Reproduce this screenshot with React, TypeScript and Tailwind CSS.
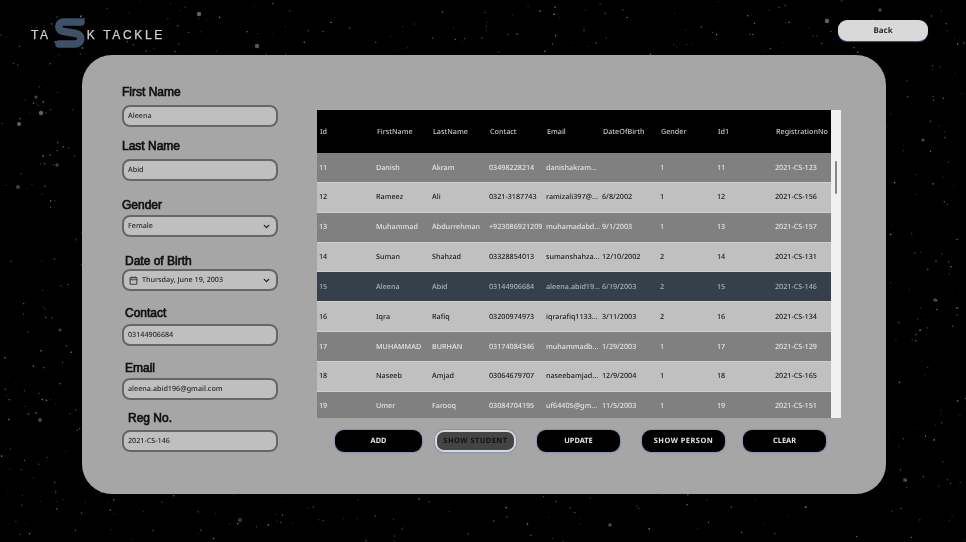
import { Calendar, ChevronDown } from "lucide-react";

function seeded(seed: number) {
  let a = seed;
  return () => {
    a = (a + 0x6d2b79f5) | 0;
    let t = Math.imul(a ^ (a >>> 15), 1 | a);
    t = (t + Math.imul(t ^ (t >>> 7), 61 | t)) ^ t;
    return ((t ^ (t >>> 14)) >>> 0) / 4294967296;
  };
}

function Stars() {
  const rnd = seeded(42);
  const small = Array.from({ length: 1300 }, () => ({
    x: rnd() * 966,
    y: rnd() * 542,
    r: 0.4 + rnd() * 0.45,
    o: 0.2 + rnd() * 0.5,
  }));
  const big: [number, number, number, number][] = [
    [199, 14, 2.2, 0.55], [257, 46, 2.2, 0.5], [41, 113, 2.2, 0.55], [19, 124, 2, 0.55],
    [36, 97, 1.6, 0.4], [57, 165, 1.8, 0.35], [18, 187, 2, 0.35], [827, 21, 2.2, 0.55],
    [880, 10, 1.8, 0.4], [923, 140, 1.6, 0.4], [935, 300, 1.8, 0.4], [40, 420, 2, 0.4],
    [240, 520, 2, 0.35], [610, 525, 1.8, 0.4], [905, 480, 2, 0.35], [60, 330, 1.6, 0.35],
  ];
  return (
    <svg className="absolute inset-0" width="966" height="542" viewBox="0 0 966 542">
      {small.map((s, i) => (
        <circle key={i} cx={s.x} cy={s.y} r={s.r} fill="#b8c2d4" opacity={s.o} />
      ))}
      {big.map(([x, y, r, o], i) => (
        <circle key={i} cx={x} cy={y} r={r} fill="#aab2c0" opacity={o} />
      ))}
    </svg>
  );
}

const rows = [
  ["11", "Danish", "Akram", "03498228214", "danishakram...", "", "1", "11", "2021-CS-123"],
  ["12", "Rameez", "Ali", "0321-3187743", "ramizali397@...", "6/8/2002", "1", "12", "2021-CS-156"],
  ["13", "Muhammad", "Abdurrehman", "+923086921209", "muhamadabd...", "9/1/2003", "1", "13", "2021-CS-157"],
  ["14", "Suman", "Shahzad", "03328854013", "sumanshahza...", "12/10/2002", "2", "14", "2021-CS-131"],
  ["15", "Aleena", "Abid", "03144906684", "aleena.abid19...", "6/19/2003", "2", "15", "2021-CS-146"],
  ["16", "Iqra", "Rafiq", "03200974973", "iqrarafiq1133...", "3/11/2003", "2", "16", "2021-CS-134"],
  ["17", "MUHAMMAD", "BURHAN", "03174084346", "muhammadb...", "1/29/2003", "1", "17", "2021-CS-129"],
  ["18", "Naseeb", "Amjad", "03064679707", "naseebamjad...", "12/9/2004", "1", "18", "2021-CS-165"],
  ["19", "Umer", "Farooq", "03084704195", "uf64405@gm...", "11/5/2003", "1", "19", "2021-CS-151"],
];
const headers = ["Id", "FirstName", "LastName", "Contact", "Email", "DateOfBirth", "Gender", "Id1", "RegistrationNo"];
const cols = "grid grid-cols-[57px_56px_57px_57px_56px_58px_57px_58px_56px]";

function Label({ children, className }: { children: string; className: string }) {
  return (
    <div className={`h-[14px] text-[12px] leading-[14px] text-[#111111] [-webkit-text-stroke:0.65px_#111111] font-['Liberation_Sans',sans-serif] ${className}`}>
      {children}
    </div>
  );
}

function Box({ children, className }: { children: React.ReactNode; className: string }) {
  return (
    <div className={`w-[156px] h-[22px] rounded-[8px] border-2 border-[#666666] bg-[#bfbfbf] flex items-center pl-[4px] pr-[5px] text-[7.2px] font-medium text-[#2a2a2a] [text-rendering:geometricPrecision] font-['Noto_Sans',sans-serif] ${className}`}>
      {children}
    </div>
  );
}

function Btn({ children, className }: { children: string; className: string }) {
  return (
    <div className={`h-[22px] rounded-[9px] flex items-center justify-center pt-[1px] text-[7.4px] font-bold [text-rendering:geometricPrecision] font-['Noto_Sans',sans-serif] shadow-[0_0_1.5px_0.5px_#6f86b8] ${className}`}>
      {children}
    </div>
  );
}

export default function App() {
  return (
    <div className="relative w-[966px] h-[542px] overflow-hidden bg-black blur-[0.35px]">
      <Stars />
      <div className="relative flex flex-col">
        <header className="h-[55px] flex justify-between">
          <div className="ml-[31px] mt-[17px] h-[32px] flex items-center text-[12px] tracking-[2.65px] text-[#d2d2d2] [-webkit-text-stroke:0.25px_#d2d2d2] font-['Liberation_Sans',sans-serif]">
            <span className="mt-[3px]">TA</span>
            <svg width="32" height="32" viewBox="0 0 32 32" className="ml-[3px] mr-[1px]">
              <path d="M27 5 H10 C3 5 3 14 10 14.5 L22 16.5 C29 17.5 28 27 21 27 H5" fill="none" stroke="#3d5168" strokeWidth="7.5" strokeLinecap="round" />
              <circle cx="1.5" cy="25" r="1.2" fill="#3d5168" />
              <circle cx="30" cy="2" r="1" fill="#3d5168" />
            </svg>
            <span className="mt-[3px]">K TACKLE</span>
          </div>
          <div className="mr-[38px] mt-[20px] w-[90px] h-[21px] rounded-[9px] bg-[#d9d9d9] flex items-center justify-center text-[8px] font-bold text-[#2a2f38] [text-rendering:geometricPrecision] font-['Noto_Sans',sans-serif] shadow-[0_1px_1px_#3a5a90]">
            Back
          </div>
        </header>
        <main className="ml-[82px] w-[804px] h-[439px] rounded-[30px] bg-[#a6a6a6] flex">
          <section className="ml-[40px] pt-[30px] w-[156px] flex flex-col">
            <Label className="">First Name</Label>
            <Box className="mt-[6px]">Aleena</Box>
            <Label className="mt-[12px]">Last Name</Label>
            <Box className="mt-[6px]">Abid</Box>
            <Label className="mt-[17px]">Gender</Label>
            <Box className="mt-[3px] justify-between">
              <span>Female</span>
              <ChevronDown size={9} strokeWidth={3.5} color="#222222" />
            </Box>
            <Label className="mt-[17px] ml-[3px]">Date of Birth</Label>
            <Box className="mt-[1px]">
              <Calendar size={9} strokeWidth={3} color="#444444" className="ml-[1px] mr-[4px]" />
              <span>Thursday, June 19, 2003</span>
              <ChevronDown size={9} strokeWidth={3.5} color="#222222" className="ml-auto" />
            </Box>
            <Label className="mt-[15px] ml-[3px]">Contact</Label>
            <Box className="mt-[4px]">03144906684</Box>
            <Label className="mt-[15px] ml-[3px]">Email</Label>
            <Box className="mt-[3px]">aleena.abid196@gmail.com</Box>
            <Label className="mt-[11px] ml-[6px]">Reg No.</Label>
            <Box className="mt-[5px]">2021-CS-146</Box>
          </section>
          <section className="ml-[39px] pt-[55px] w-[524px] flex flex-col">
            <div className="relative h-[308px] flex overflow-hidden font-['Noto_Sans',sans-serif] text-[7.2px] font-medium [text-rendering:geometricPrecision]">
              <div className="w-[514px]">
                <div className={`${cols} h-[43px] bg-black text-[#c8c8c8] items-center pl-[3px] pt-[1px]`}>
                  {headers.map((h) => (
                    <div key={h} className="whitespace-nowrap">{h}</div>
                  ))}
                </div>
                {rows.map((r, i) => {
                  const selected = r[0] === "15";
                  const dark = i % 2 === 0 && !selected;
                  return (
                    <div
                      key={r[0]}
                      className={`${cols} h-[29.85px] items-center pl-[2px] pt-[1px] border-b border-[#cfcfd6] ${
                        selected ? "bg-[#36404a] text-[#aab2ba]" : dark ? "bg-[#808080] text-[#e2e2e2]" : "bg-[#c0c0c0] text-[#202020]"
                      }`}
                    >
                      {r.map((c, j) => (
                        <div key={j} className="whitespace-nowrap">{c}</div>
                      ))}
                    </div>
                  );
                })}
              </div>
              <div className="w-[10px] bg-[#f0f0f0] pt-[51px] flex justify-center">
                <div className="w-[2px] h-[33px] bg-[#888888] rounded-full" />
              </div>
            </div>
            <div className="mt-[12px] ml-[18px] flex">
              <Btn className="w-[87px] bg-black text-[#e4e4e4]">ADD</Btn>
              <Btn className="ml-[13px] w-[81px] bg-[#444444] text-[#111111] border-2 border-[#d8d8d8] tracking-[0.5px]">SHOW STUDENT</Btn>
              <Btn className="ml-[21px] w-[83px] bg-black text-[#e4e4e4]">UPDATE</Btn>
              <Btn className="ml-[22px] w-[83px] bg-black text-[#e4e4e4] tracking-[0.5px]">SHOW PERSON</Btn>
              <Btn className="ml-[18px] w-[83px] bg-black text-[#e4e4e4]">CLEAR</Btn>
            </div>
          </section>
        </main>
      </div>
    </div>
  );
}
